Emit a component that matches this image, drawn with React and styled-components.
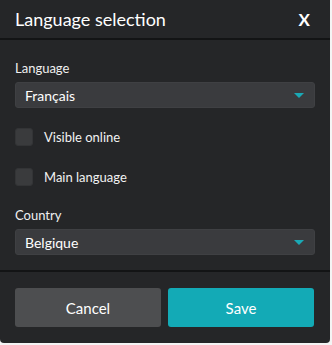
import React from 'react';
import styled, { createGlobalStyle } from 'styled-components';

const GlobalStyle = createGlobalStyle`
  html, body {
    margin: 0;
    padding: 0;
    background: #f4f4f4;
  }
  body {
    font-family: Lato, "Noto Sans", sans-serif;
  }
`;

const Dialog = styled.div`
  width: 330px;
  box-sizing: border-box;
  background-color: #252628;
  color: #f2f2f2;
  border-radius: 0 0 4px 4px;
  display: flex;
  flex-direction: column;
`;
const Header = styled.header`
  display: flex;
  align-items: center;
  justify-content: space-between;
  height: 38px;
  padding: 0 20px 0 15px;
  border-bottom: 2px solid #131415;
`;
const Title = styled.h2`
  margin: 0;
  font-size: 18px;
  font-weight: 400;
  color: #ffffff;
`;
const Close = styled.span`
  font-size: 17px;
  font-weight: 700;
  color: #ffffff;
`;
const Body = styled.div`
  padding: 20px 15px 15px;
  display: flex;
  flex-direction: column;
  border-bottom: 2px solid #131415;
`;
const Label = styled.label`
  font-size: 13px;
  line-height: 16px;
  color: #f0f0f0;
  margin-bottom: 6px;
`;
const Select = styled.div`
  height: 26px;
  box-sizing: border-box;
  display: flex;
  align-items: center;
  justify-content: space-between;
  padding: 0 10px 0 9px;
  background-color: #3a3b3e;
  border: 1px solid #3f4043;
  border-radius: 3px;
  font-size: 14px;
  color: #ffffff;
`;
const Arrow = styled.span`
  width: 0;
  height: 0;
  border-left: 5px solid transparent;
  border-right: 5px solid transparent;
  border-top: 5px solid #1aa9b5;
`;
const CheckRow = styled.div`
  display: flex;
  align-items: center;
  gap: 11px;
  margin-top: ${p => p.$top}px;
  font-size: 13px;
  line-height: 18px;
`;
const Box = styled.span`
  width: 18px;
  height: 18px;
  box-sizing: border-box;
  border-radius: 3px;
  background-color: #3a3b3d;
  border: 1px solid #333436;
`;
const Field = styled.div`
  display: flex;
  flex-direction: column;
  margin-top: ${p => p.$top || 0}px;
`;
const Footer = styled.footer`
  display: grid;
  grid-template-columns: 1fr 1fr;
  gap: 7px;
  padding: 16px 16px 16px 15px;
`;
const Button = styled.button`
  height: 39px;
  border: none;
  border-radius: 3px;
  font-family: inherit;
  font-size: 15px;
  color: #ffffff;
  background-color: ${p => (p.$primary ? '#13aab6' : '#4d4e50')};
`;

const App = () => (
  <>
    <GlobalStyle />
    <Dialog>
      <Header>
        <Title>Language selection</Title>
        <Close>X</Close>
      </Header>
      <Body>
        <Field>
          <Label>Language</Label>
          <Select>
            Français
            <Arrow />
          </Select>
        </Field>
        <CheckRow $top={20}>
          <Box />
          Visible online
        </CheckRow>
        <CheckRow $top={22}>
          <Box />
          Main language
        </CheckRow>
        <Field $top={21}>
          <Label>Country</Label>
          <Select>
            Belgique
            <Arrow />
          </Select>
        </Field>
      </Body>
      <Footer>
        <Button>Cancel</Button>
        <Button $primary>Save</Button>
      </Footer>
    </Dialog>
  </>
);

export default App;
